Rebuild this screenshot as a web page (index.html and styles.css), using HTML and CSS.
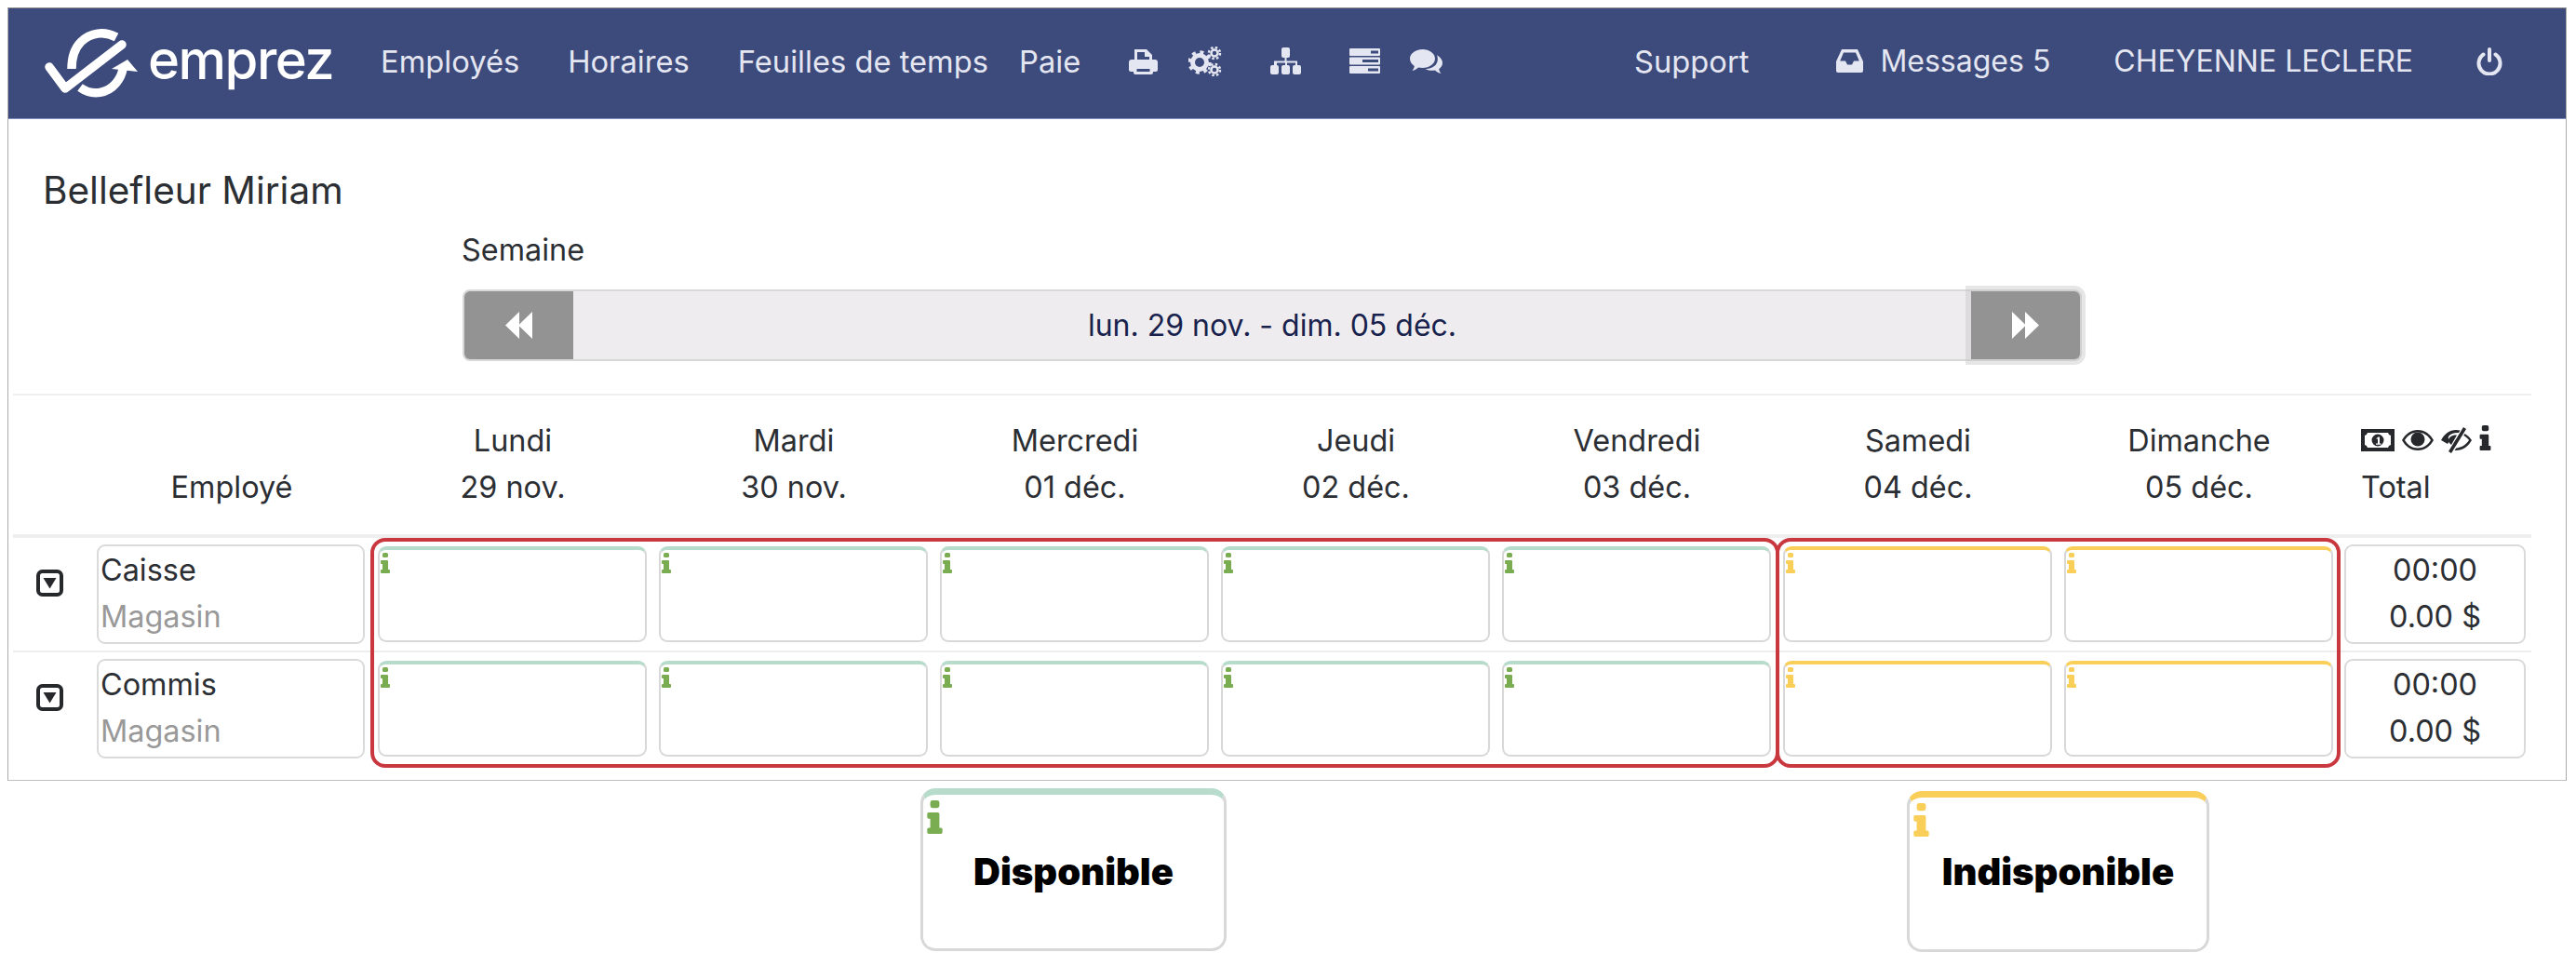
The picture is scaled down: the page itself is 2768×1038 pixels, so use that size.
FILE: index.html
```html
<!DOCTYPE html>
<html lang="fr">
<head>
<meta charset="utf-8">
<title>Emprez</title>
<link rel="stylesheet" href="styles.css">
</head>
<body>
<svg class="defs" width="0" height="0" aria-hidden="true">
  <symbol id="i-info" viewBox="0 0 10 22">
    <rect x="2" y="0" width="6" height="5" rx="1.5"/>
    <path d="M1 8h6a1 1 0 0 1 1 1v9h1a1 1 0 0 1 1 1v2a1 1 0 0 1-1 1H1a1 1 0 0 1-1-1v-2a1 1 0 0 1 1-1h1v-6H1a1 1 0 0 1-1-1V9a1 1 0 0 1 1-1z"/>
  </symbol>
  <symbol id="i-caret" viewBox="0 0 29 29">
    <rect x="2" y="2" width="25" height="25" rx="4.5" fill="none" stroke="currentColor" stroke-width="4"/>
    <path d="M7.5 9h14l-7 11.500z"/>
  </symbol>
</svg>
<div class="frame">
  <nav class="nav">
    <a class="logo">
      <svg class="logo-mark" viewBox="0 0 120 85">
        <path d="M13 46L30 69L91 22" fill="none" stroke="#fff" stroke-width="9.5" stroke-linecap="round" stroke-linejoin="round"/>
        <path d="M85 14C72 7 57 9 47 19C39 27 37 37 37 48" fill="none" stroke="#fff" stroke-width="9.5"/>
        <path d="M46 68C60 78 76 74 85 63C89 58 91 54 92 48" fill="none" stroke="#fff" stroke-width="9.5"/>
        <path d="M97 38L108 51L80 48z" fill="#fff"/>
      </svg>
      <span class="logo-text">emprez</span>
    </a>
    <ul class="menu">
      <li>Employés</li>
      <li>Horaires</li>
      <li class="pair"><span>Feuilles de temps</span><span>Paie</span></li>
      <li class="pair">
        <svg class="ico ico-print" viewBox="0 0 31 28"><path d="M6 1h13l6 6v6h-3V9h-5V4H9v9H6z"/><path d="M3 12h25a3 3 0 0 1 3 3v8a2 2 0 0 1-2 2h-3v-5H5v5H2a2 2 0 0 1-2-2v-8a3 3 0 0 1 3-3z"/><path fill-rule="evenodd" d="M5 19h21v7a2 2 0 0 1-2 2H7a2 2 0 0 1-2-2zM8.500 22v3h14v-3z"/></svg>
        <svg class="ico ico-gears" viewBox="0 0 36 32" fill="none" stroke="currentColor">
          <circle cx="12" cy="17" r="7.500" stroke-width="5"/>
          <circle cx="12" cy="17" r="11" stroke-width="3.500" stroke-dasharray="4 4.640"/>
          <circle cx="28" cy="7" r="3.500" stroke-width="2.500"/>
          <circle cx="28" cy="7" r="6" stroke-width="2.500" stroke-dasharray="2.500 2.210"/>
          <circle cx="28" cy="25" r="3.500" stroke-width="2.500"/>
          <circle cx="28" cy="25" r="6" stroke-width="2.500" stroke-dasharray="2.500 2.210"/>
        </svg>
      </li>
      <li><svg class="ico ico-map" viewBox="0 0 33 29"><rect x="12" y="0" width="9" height="11" rx="2"/><rect x="0" y="19" width="9" height="10" rx="2"/><rect x="12" y="19" width="9" height="10" rx="2"/><rect x="24" y="19" width="9" height="10" rx="2"/><path d="M15.500 10h2v4.500h11.500V20h-2v-3.500h-9V20h-2v-3.500h-9V20H4v-5.500h11.500z"/></svg></li>
      <li class="pair pair-tight">
        <svg class="ico ico-server" viewBox="0 0 33 27"><path fill-rule="evenodd" d="M1 0h31a1 1 0 0 1 1 1v6a1 1 0 0 1-1 1H1a1 1 0 0 1-1-1V1a1 1 0 0 1 1-1zM23 2.500v3h8v-3z"/><path fill-rule="evenodd" d="M1 9.500h31a1 1 0 0 1 1 1v6a1 1 0 0 1-1 1H1a1 1 0 0 1-1-1v-6a1 1 0 0 1 1-1zM14 12v3h17v-3z"/><path fill-rule="evenodd" d="M1 19h31a1 1 0 0 1 1 1v6a1 1 0 0 1-1 1H1a1 1 0 0 1-1-1v-6a1 1 0 0 1 1-1zM20 21.500v3h11v-3z"/></svg>
        <svg class="ico ico-chat" viewBox="0 0 35 26"><path d="M13.500 0C21 0 27 4.500 27 10s-6 10-13.500 10c-1.500 0-3-.2-4.300-.5C7.500 21 5 22.500 2.500 23c1.200-1.500 2-3 2.300-5C1.800 16 0 13.200 0 10 0 4.500 6 0 13.500 0z"/><path d="M29.500 6.500C33 8.500 35 11.500 35 14.500c0 2.700-1.400 5-3.800 6.700.3 1.800 1.100 3.300 2.300 4.800-2.500-.4-4.800-1.700-6.500-3.400-2.700.5-7.500.4-10.500-1.600 8 .2 16-5 12.500-15z"/></svg>
      </li>
    </ul>
    <ul class="menu-right">
      <li class="support">Support</li>
      <li class="messages"><svg class="ico ico-inbox" viewBox="0 0 29 25"><path fill-rule="evenodd" d="M6 0h17l6 13v10a2 2 0 0 1-2 2H2a2 2 0 0 1-2-2V13zM8 3.500L4.200 12.500H10l2 4h5l2-4h5.800L21 3.500z"/></svg><span>Messages 5</span></li>
      <li class="user">CHEYENNE LECLERE</li>
      <li><svg class="ico ico-power" viewBox="0 0 28 30" fill="none" stroke="currentColor" stroke-width="4" stroke-linecap="round"><path d="M14 2v12"/><path d="M7.500 7.500a11.500 11.500 0 1 0 13 0"/></svg></li>
    </ul>
  </nav>

  <div class="content">
    <h1 class="title">Bellefleur Miriam</h1>
    <div class="week-label">Semaine</div>
    <div class="week-bar">
      <button class="week-btn week-prev"><svg class="ico-arrows" viewBox="0 0 29 29"><path d="M15 0v29L0 14.500zM29 0v29L14 14.500z"/></svg></button>
      <div class="week-range">lun. 29 nov. - dim. 05 déc.</div>
      <button class="week-btn week-next"><svg class="ico-arrows" viewBox="0 0 29 29"><path d="M0 0v29l15-14.500zM14 0v29l15-14.500z"/></svg></button>
    </div>
    <hr class="rule">

    <div class="grid head">
      <div></div>
      <div class="head-cell head-bottom">Employé</div>
      <div class="head-cell">Lundi<br>29 nov.</div>
      <div class="head-cell">Mardi<br>30 nov.</div>
      <div class="head-cell">Mercredi<br>01 déc.</div>
      <div class="head-cell">Jeudi<br>02 déc.</div>
      <div class="head-cell">Vendredi<br>03 déc.</div>
      <div class="head-cell">Samedi<br>04 déc.</div>
      <div class="head-cell">Dimanche<br>05 déc.</div>
      <div class="head-total">
        <div class="legend-icons">
          <svg class="ic-money" viewBox="0 0 36 24"><path fill-rule="evenodd" d="M0 0h36v24H0zM7 4a4 4 0 0 1-3 3v10a4 4 0 0 1 3 3h22a4 4 0 0 1 3-3V7a4 4 0 0 1-3-3z"/><path fill-rule="evenodd" d="M18 5.500a6.500 6.500 0 1 1 0 13 6.500 6.500 0 0 1 0-13zM16 10.500l2.500-2h1.500v7h1.500v1.200h-5.500v-1.200h2V10.500z"/></svg>
          <svg class="ic-eye" viewBox="0 0 34 22"><path fill-rule="evenodd" d="M17 0c7.500 0 13.500 4.500 17 11-3.500 6.500-9.500 11-17 11S3.500 17.500 0 11C3.500 4.500 9.500 0 17 0zM3 11c3 5 8 8.500 14 8.500S28 16 31 11c-3-5-8-8.500-14-8.500S6 6 3 11z"/><circle cx="17" cy="10" r="7.500"/></svg>
          <svg class="ic-slash" viewBox="0 0 33 28"><path fill-rule="evenodd" d="M16 3c1.500 0 3 .2 4.500.6L19 6c-4-.5-9 1-11 4-.5 1.500 0 3.500 1 5l-2 3C4 16.500 1.800 14.500 0 14 3.500 7.500 9 3 16 3zM25.500 7c3 1.700 5.500 4 7.500 7-3.500 6.500-9.500 11-17 11h-1.500l1.800-2.600C21.500 22 27 19 30 14c-1.500-2-3.300-3.700-5.800-5z"/><path d="M24 0l3 2L11 28l-3-2z"/><path d="M17 8.500L11 19c-2-1.500-3-3-3-5 0-3 4-6 9-5.500z"/></svg>
          <svg class="ic-i" viewBox="0 0 10 22"><use href="#i-info"/></svg>
        </div>
        <div>Total</div>
      </div>
    </div>

    <div class="rows">
      <div class="grid row">
        <div class="toggle"><svg class="caret" viewBox="0 0 29 29"><use href="#i-caret"/></svg></div>
        <div class="pad-label"><div class="box label"><div>Caisse</div><div class="muted">Magasin</div></div></div>
        <div class="pad"><div class="cell ok"><svg class="cell-i"><use href="#i-info"/></svg></div></div>
        <div class="pad"><div class="cell ok"><svg class="cell-i"><use href="#i-info"/></svg></div></div>
        <div class="pad"><div class="cell ok"><svg class="cell-i"><use href="#i-info"/></svg></div></div>
        <div class="pad"><div class="cell ok"><svg class="cell-i"><use href="#i-info"/></svg></div></div>
        <div class="pad"><div class="cell ok"><svg class="cell-i"><use href="#i-info"/></svg></div></div>
        <div class="pad"><div class="cell no"><svg class="cell-i"><use href="#i-info"/></svg></div></div>
        <div class="pad"><div class="cell no"><svg class="cell-i"><use href="#i-info"/></svg></div></div>
        <div class="pad-total"><div class="box total"><div>00:00</div><div>0.00 $</div></div></div>
      </div>
      <div class="grid row row-last">
        <div class="toggle"><svg class="caret" viewBox="0 0 29 29"><use href="#i-caret"/></svg></div>
        <div class="pad-label"><div class="box label"><div>Commis</div><div class="muted">Magasin</div></div></div>
        <div class="pad"><div class="cell ok"><svg class="cell-i"><use href="#i-info"/></svg></div></div>
        <div class="pad"><div class="cell ok"><svg class="cell-i"><use href="#i-info"/></svg></div></div>
        <div class="pad"><div class="cell ok"><svg class="cell-i"><use href="#i-info"/></svg></div></div>
        <div class="pad"><div class="cell ok"><svg class="cell-i"><use href="#i-info"/></svg></div></div>
        <div class="pad"><div class="cell ok"><svg class="cell-i"><use href="#i-info"/></svg></div></div>
        <div class="pad"><div class="cell no"><svg class="cell-i"><use href="#i-info"/></svg></div></div>
        <div class="pad"><div class="cell no"><svg class="cell-i"><use href="#i-info"/></svg></div></div>
        <div class="pad-total"><div class="box total"><div>00:00</div><div>0.00 $</div></div></div>
      </div>
      <div class="zone zone-week"></div>
      <div class="zone zone-end"></div>
    </div>
  </div>
</div>

<div class="legend">
  <div class="key key-ok"><svg class="key-i"><use href="#i-info"/></svg><span>Disponible</span></div>
  <div class="key key-no"><svg class="key-i"><use href="#i-info"/></svg><span>Indisponible</span></div>
</div>
</body>
</html>
```

FILE: styles.css
```css
* { box-sizing: border-box; }
html, body { background: #fff; }
body {
  margin: 8px;
  font-family: Inter, "Liberation Sans", sans-serif;
  font-size: 32.4px;
  color: #2b2e33;
}
.defs { position: absolute; }
ul { list-style: none; margin: 0; padding: 0; }

.frame {
  width: 2750px;
  height: 831px;
  border: 1px solid #ababab;
  border-top-color: #8a8a8a;
  border-bottom-color: #c0c0c0;
}

/* Top bar */
.nav {
  display: flex;
  align-items: center;
  height: 119px;
  padding: 0 68px 5px 31px;
  background: #3d4a7c;
  border-bottom: 1px solid #7f8bb8;
  color: #e4e6f1;
  font-size: 32.7px;
  white-space: nowrap;
}
.logo { display: flex; align-items: center; width: 369px; }
.logo-mark { flex: none; width: 120px; height: 85px; margin-top: 5px; }
.logo-text {
  margin-left: -1px;
  font-size: 58px;
  font-weight: 500;
  letter-spacing: -1.5px;
  color: #fff;
  line-height: 60px;
  position: relative;
  top: -2px;
}
.menu { display: flex; align-items: center; gap: 52px; }
.pair { display: flex; align-items: center; gap: 33px; }
.pair-tight { gap: 32px; }
.menu-right { display: flex; align-items: center; gap: 68px; margin-left: auto; }
.support { margin-right: 26px; }
.messages { display: flex; align-items: center; gap: 18px; font-size: 32px; }
.user { font-size: 32px; }
.ico { display: block; fill: currentColor; }
.ico-print { width: 31px; height: 28px; }
.ico-gears { width: 36px; height: 32px; fill: none; }
.ico-map { width: 33px; height: 29px; }
.ico-server { width: 33px; height: 27px; }
.ico-chat { width: 35px; height: 26px; }
.ico-inbox { width: 29px; height: 25px; }
.ico-power { width: 28px; height: 30px; fill: none; }

/* Page body */
.content { padding: 53px 0 0 5px; }
.title {
  margin: 0 0 19px 32px;
  font-size: 40.5px;
  font-weight: 400;
  line-height: 48px;
}
.week-label { margin-left: 482px; line-height: 42px; }
.week-bar {
  display: flex;
  width: 1740px;
  height: 77px;
  margin: 21px 0 0 483px;
  background: #eeecee;
  border: 2px solid #d8d8d8;
  border-radius: 8px;
  color: #18224d;
  font-size: 32px;
}
.week-btn {
  display: flex;
  align-items: center;
  justify-content: center;
  padding: 0;
  border: 0;
  background: #939393;
}
.week-prev { width: 117px; border-radius: 6px 0 0 6px; }
.week-next { width: 117px; border-radius: 0 6px 6px 0; box-shadow: 0 0 0 6px rgba(200, 200, 200, .45); }
.ico-arrows { width: 29px; height: 29px; fill: #fff; }
.week-range { flex: 1; text-align: center; line-height: 73px; }
.rule { margin: 35px 0 0; width: 2706px; border: 0; border-top: 2px solid #eeeeee; }

/* Schedule grid */
.grid {
  display: grid;
  grid-template-columns: 84px repeat(8, 302px) 206px;
  width: 2706px;
}
.head { padding-top: 24px; height: 149px; line-height: 50px; }
.head-cell { text-align: center; }
.head-bottom { padding-top: 50px; }
.head-total { padding-left: 23px; }
.legend-icons { display: flex; align-items: center; gap: 8px; height: 50px; margin-top: -1px; color: #26282c; fill: currentColor; }
.ic-money { width: 36px; height: 24px; }
.ic-eye { width: 34px; height: 22px; }
.ic-slash { width: 33px; height: 28px; }
.ic-i { width: 13px; height: 27px; margin-top: -5px; fill: currentColor; }
.head-total > div:last-child { margin-top: 1px; }

.rows { position: relative; width: 2706px; border-top: 4px solid #eeeeee; }
.row { height: 123px; padding-top: 7px; border-bottom: 2px solid #eeeeee; }
.row-last { height: 121px; border-bottom: 0; }
.toggle { padding: 27px 0 0 25px; }
.caret { display: block; width: 29px; height: 29px; color: #26282c; fill: currentColor; }
.pad-label { padding: 0 8px 0 6px; }
.pad { padding: 2px 7px 0 6px; }
.pad-total { padding: 0 6px 0 5px; }
.box {
  height: 107px;
  padding-top: 1px;
  border: 2px solid #dadada;
  border-radius: 9px;
  line-height: 50px;
}
.label { padding-left: 2px; }
.muted { color: #999999; }
.total { text-align: center; }
.cell {
  height: 103px;
  padding: 3px 0 0 1px;
  border: 2px solid #d8d8d8;
  border-top-width: 4px;
  border-radius: 9px;
}
.ok { border-top-color: #b8dccb; color: #7aad52; }
.no { border-top-color: #f9cf5a; color: #f9cf5a; }
.cell-i { display: block; width: 10px; height: 22px; fill: currentColor; }

/* Red highlight zones drawn over the grid */
.zone {
  position: absolute;
  top: 0;
  height: 247px;
  border: 4px solid #c9373f;
  border-radius: 16px;
}
.zone-week { left: 384px; width: 1514px; }
.zone-end { left: 1894px; width: 607px; }

/* Legend under the frame */
.legend { display: flex; align-items: flex-start; padding-left: 981px; }
.key {
  position: relative;
  display: flex;
  align-items: center;
  justify-content: center;
  margin-top: 8px;
  border: 3px solid #d8d8d8;
  border-top-width: 7px;
  border-radius: 16px;
  font-size: 40px;
  font-weight: 900;
  color: #000;
}
.key-ok { width: 329px; height: 175px; border-top-color: #b8dccb; fill: #7aad52; }
.key-no { width: 325px; height: 173px; margin: 11px 0 0 731px; padding-bottom: 5px; border-top-color: #f9cf5a; fill: #f9cf5a; }
.key-i { position: absolute; top: 6px; left: 4px; width: 17px; height: 36px; }
```
